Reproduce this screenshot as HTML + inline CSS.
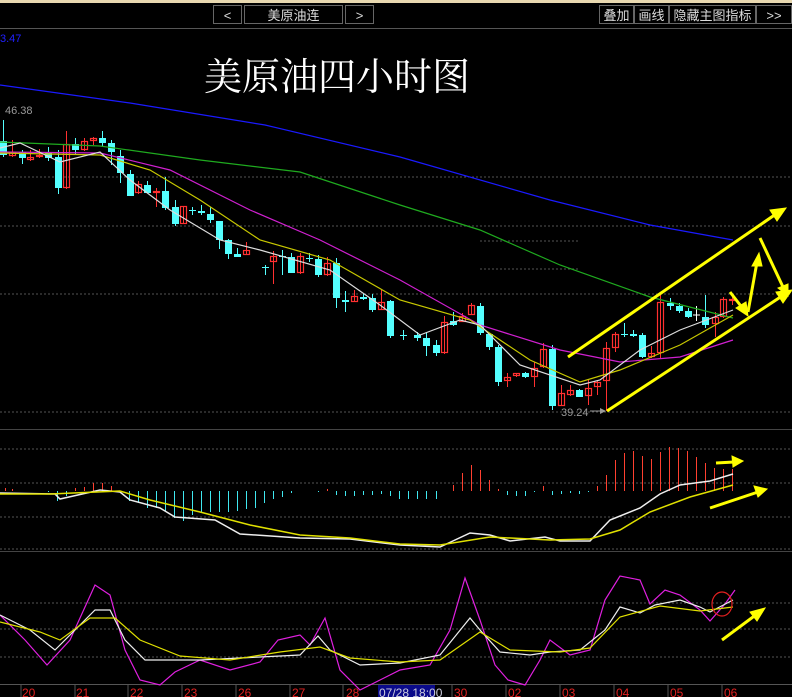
<!DOCTYPE html>
<html><head><meta charset="utf-8"><style>
html,body{margin:0;padding:0;background:#000;width:792px;height:697px;overflow:hidden;font-family:"Liberation Sans","Noto Sans CJK SC",sans-serif}
.top{position:absolute;left:0;top:0;width:792px;height:3px;background:#e8d8b0}
.btn{position:absolute;top:5px;height:19px;border:1px solid #666;color:#ddd;font-size:13px;line-height:19px;text-align:center;box-sizing:border-box}
</style></head><body>
<div class="top"></div>
<div class="btn" style="left:213px;width:29px">&lt;</div>
<div class="btn" style="left:244px;width:99px">美原油连</div>
<div class="btn" style="left:345px;width:29px">&gt;</div>
<div class="btn" style="left:599px;width:35px">叠加</div>
<div class="btn" style="left:634px;width:35px">画线</div>
<div class="btn" style="left:669px;width:87px">隐藏主图指标</div>
<div class="btn" style="left:756px;width:36px">&gt;&gt;</div>
<svg id="s" width="792" height="697" style="position:absolute;left:0;top:0" xmlns="http://www.w3.org/2000/svg">
<line x1="0" y1="28.5" x2="792" y2="28.5" stroke="#555"/>
<line x1="0" y1="429.5" x2="792" y2="429.5" stroke="#444"/>
<line x1="0" y1="551.5" x2="792" y2="551.5" stroke="#444"/>
<line x1="0" y1="684.5" x2="792" y2="684.5" stroke="#555"/>
<g stroke="#555" stroke-dasharray="2,2">
<line x1="0" y1="177" x2="792" y2="177"/><line x1="0" y1="226" x2="792" y2="226"/>
<line x1="0" y1="294" x2="792" y2="294"/><line x1="0" y1="412" x2="792" y2="412"/>
<line x1="480" y1="241" x2="580" y2="241"/><line x1="480" y1="269" x2="580" y2="269"/>
<line x1="0" y1="449" x2="792" y2="449"/><line x1="0" y1="483" x2="792" y2="483"/>
<line x1="0" y1="517" x2="792" y2="517"/><line x1="0" y1="549" x2="792" y2="549"/>
<line x1="0" y1="603" x2="792" y2="603"/><line x1="0" y1="629" x2="792" y2="629"/><line x1="0" y1="657" x2="792" y2="657"/>
</g>
<g id="c"></g>
<g fill="none" stroke-width="1.2">
<polyline stroke="#1a1aff" points="0,85 130,103 265,125 400,157 550,200 650,225 733,240"/>
<polyline stroke="#1faa1f" points="0,142 100,146 200,160 300,172 400,205 480,230 560,265 650,297 733,318"/>
<polyline stroke="#d020d0" points="0,152 100,153 170,170 250,210 320,240 400,280 480,325 560,350 620,362 680,357 733,340"/>
<polyline stroke="#c8c800" points="0,153 100,155 150,170 200,200 260,240 330,260 400,300 470,320 530,360 580,382 620,370 680,345 733,315"/>
<polyline stroke="#ddd" points="0,148 20,143 60,162 100,152 130,180 170,210 220,240 260,250 330,270 380,305 420,335 460,320 480,325 520,365 580,385 600,380 640,350 680,330 733,310"/>
<polyline stroke="#eee" stroke-width="1.5" points="0,493 55,494 60,499 100,490 120,492 130,500 160,508 175,517 215,520 240,534 300,538 350,539 400,545 440,547 470,533 490,535 510,541 545,537 560,541 590,541 610,520 640,508 660,494 680,485 710,481 733,474"/>
<polyline stroke="#e0e000" stroke-width="1.5" points="0,494 50,494 120,491 150,500 200,512 250,525 300,535 350,538 400,544 440,545 490,537 550,540 590,539 620,530 650,512 690,497 733,485"/>
<polyline stroke="#e020e0" points="0,615 25,640 47,665 70,640 95,585 110,595 125,650 140,680 160,685 175,672 200,660 230,670 260,662 278,640 300,635 310,645 325,618 340,670 360,690 380,680 400,670 430,665 450,630 465,578 480,620 495,665 508,680 525,685 540,660 550,640 570,655 590,650 605,600 620,576 640,580 650,604 665,590 680,595 700,610 710,621 725,604 735,590"/>
<polyline stroke="#eee" points="0,615 30,630 55,650 70,635 95,610 110,610 125,640 145,660 200,660 260,657 300,655 318,636 330,650 360,665 400,663 440,655 470,618 480,630 500,652 530,655 550,652 580,650 605,630 620,607 640,613 655,605 680,600 700,607 710,612 733,600"/>
<polyline stroke="#e0e000" points="0,622 40,632 60,640 90,618 115,618 140,640 180,656 230,660 280,652 320,647 350,658 400,662 440,660 480,632 510,650 560,652 590,648 620,617 660,606 700,611 733,607"/>
<ellipse cx="722" cy="604" rx="10" ry="12" stroke="#e02020"/>
</g>
<g stroke="#ffff00" stroke-width="3" fill="#ffff00">
<line x1="568" y1="357" x2="776" y2="214"/><polygon points="786,208 770,210 777,221" stroke-width="1"/>
<line x1="607" y1="411" x2="782" y2="296"/><polygon points="792,290 776,292 783,303" stroke-width="1"/>
<line x1="730" y1="292" x2="744" y2="310"/><polygon points="748,316 736,308 746,302" stroke-width="1"/>
<line x1="748" y1="312" x2="757" y2="262"/><polygon points="759,253 752,266 762,266" stroke-width="1"/>
<line x1="760" y1="238" x2="783" y2="287"/><polygon points="788,296 778,288 788,284" stroke-width="1"/>
<line x1="716" y1="463" x2="734" y2="462"/><polygon points="743,461 732,456 733,467" stroke-width="1"/>
<line x1="710" y1="508" x2="758" y2="492"/><polygon points="767,489 754,486 758,497" stroke-width="1"/>
<line x1="722" y1="640" x2="757" y2="614"/><polygon points="765,608 750,612 757,621" stroke-width="1"/>
</g>
<line x1="590" y1="411" x2="603" y2="411" stroke="#999"/><polygon points="606,411 600,408 600,414" fill="#999"/>
<text x="0" y="42" fill="#2020ff" font-size="11">3.47</text>
<text x="5" y="114" fill="#999" font-size="11">46.38</text>
<text x="561" y="416" fill="#999" font-size="11">39.24</text>
<text x="204" y="90" fill="#fff" font-size="38" font-family="'Noto Serif CJK SC',serif">美原油四小时图</text>
<rect x="378" y="685" width="57" height="12" fill="#0a0a8a"/>
<g fill="#e02020" font-size="12">
<text x="22" y="697">20</text><text x="76" y="697">21</text><text x="130" y="697">22</text><text x="184" y="697">23</text><text x="238" y="697">26</text><text x="292" y="697">27</text><text x="346" y="697">28</text><text x="454" y="697">30</text><text x="508" y="697">02</text><text x="562" y="697">03</text><text x="616" y="697">04</text><text x="670" y="697">05</text><text x="724" y="697">06</text>
</g>
<text x="379" y="697" fill="#ccd" font-size="12">07/28 18:00</text>
<g stroke="#555"><line x1="21" y1="685" x2="21" y2="697"/><line x1="75" y1="685" x2="75" y2="697"/><line x1="128" y1="685" x2="128" y2="697"/><line x1="182" y1="685" x2="182" y2="697"/><line x1="236" y1="685" x2="236" y2="697"/><line x1="290" y1="685" x2="290" y2="697"/><line x1="343" y1="685" x2="343" y2="697"/><line x1="452" y1="685" x2="452" y2="697"/><line x1="506" y1="685" x2="506" y2="697"/><line x1="560" y1="685" x2="560" y2="697"/><line x1="614" y1="685" x2="614" y2="697"/><line x1="668" y1="685" x2="668" y2="697"/><line x1="722" y1="685" x2="722" y2="697"/></g>
</svg>
<script>
var C=[[3,0,141,155,120,157],[12,1,152,156,140,157],[22,0,152,158,150,164],[30,1,157,160,150,161],[39,1,155,157,149,158],[48,0,153,158,147,161],[58,0,157,188,150,194],[66,1,144,188,131,189],[75,0,144,150,138,155],[84,1,141,150,138,151],[93,1,138,141,137,145],[102,0,138,143,131,147],[111,0,143,152,140,165],[120,0,156,173,150,183],[130,0,174,196,170,196],[138,1,184,193,181,194],[147,0,185,193,181,193],[156,1,191,192,188,207],[165,0,191,208,177,210],[175,0,207,224,200,226],[183,1,206,224,206,224],[192,0,210,211,207,215],[201,0,211,213,205,215],[210,0,214,220,207,223],[219,0,221,240,221,249],[228,0,240,254,239,259],[237,0,254,257,248,257],[246,1,250,255,242,255],[265,0,267,268,265,275],[273,1,256,262,251,284],[282,0,256,257,250,275],[291,0,257,273,253,273],[300,1,256,273,253,274],[309,0,258,259,253,262],[318,0,259,275,255,277],[327,1,263,275,257,276],[336,0,263,298,258,308],[345,0,300,302,291,312],[354,1,296,302,290,302],[363,0,297,299,294,300],[372,0,298,310,294,312],[381,1,302,310,290,310],[390,0,301,336,300,338],[403,0,335,336,330,340],[417,0,335,338,332,341],[426,0,338,346,332,356],[436,0,345,353,340,356],[444,1,322,353,316,354],[453,0,321,325,312,326],[462,1,316,322,313,322],[471,1,305,315,303,315],[480,0,306,333,303,335],[489,0,334,347,333,350],[498,0,347,382,345,386],[507,1,377,381,373,387],[516,1,373,376,373,377],[525,0,373,377,372,378],[534,1,368,377,362,387],[543,1,349,367,343,368],[552,0,349,406,345,410],[561,1,393,406,385,406],[570,1,390,395,385,396],[579,0,390,397,389,397],[588,1,388,396,380,405],[597,1,382,387,380,395],[606,1,348,381,342,411],[615,1,334,348,332,352],[624,0,334,335,323,337],[633,0,334,336,330,337],[642,0,335,357,333,358],[651,1,353,357,346,358],[660,1,302,353,295,358],[670,0,303,306,298,310],[679,0,306,311,303,313],[688,0,311,317,308,318],[696,2,315,316,306,321],[705,0,317,325,295,328],[715,1,317,324,312,337],[723,1,299,317,297,318],[732,1,299,300,295,305]];
var g=document.getElementById('c'),h='';
C.forEach(function(c){var x=c[0],col=c[1]==0?'#54ffff':c[1]==1?'#ff3030':'#fff';
h+='<line x1="'+(x+.5)+'" y1="'+c[4]+'" x2="'+(x+.5)+'" y2="'+c[5]+'" stroke="'+col+'"/>';
var t=Math.min(c[2],c[3]),b=Math.max(c[2],c[3]),hh=Math.max(b-t,1);
if(c[1]==0)h+='<rect x="'+(x-3)+'" y="'+t+'" width="7" height="'+hh+'" fill="'+col+'"/>';
else if(c[1]==1)h+='<rect x="'+(x-2.5)+'" y="'+(t+.5)+'" width="6" height="'+Math.max(hh-1,1)+'" fill="none" stroke="'+col+'" stroke-width="1.2"/>';
else h+='<line x1="'+(x-3)+'" y1="'+t+'" x2="'+(x+4)+'" y2="'+t+'" stroke="#fff"/>';});
var z=491,H=[[5,-3],[12,-2],[48,1],[57,10],[66,5],[75,-3],[84,-4],[93,-8],[102,-8],[111,-5],[120,1],[129,10],[138,12],[147,17],[156,17],[165,20],[174,27],[183,30],[192,24],[201,21],[210,21],[219,21],[228,21],[237,20],[246,18],[255,17],[264,12],[273,8],[282,6],[291,2],[300,0],[309,0],[318,1],[327,-2],[336,4],[345,5],[354,5],[363,4],[372,4],[381,3],[390,5],[399,8],[408,8],[417,8],[426,8],[436,8],[453,-6],[462,-18],[471,-26],[480,-21],[489,-11],[498,-2],[507,4],[516,5],[525,5],[534,1],[543,-5],[552,4],[561,3],[570,2],[579,3],[588,1],[597,-5],[606,-16],[615,-31],[624,-38],[633,-40],[642,-35],[651,-32],[660,-39],[669,-44],[678,-43],[687,-40],[696,-34],[705,-28],[714,-23],[723,-22],[732,-22]];
H.forEach(function(b){var col=b[1]<0?'#ff4030':'#40e8f0';h+='<line x1="'+(b[0]+.5)+'" y1="'+z+'" x2="'+(b[0]+.5)+'" y2="'+(z+b[1])+'" stroke="'+col+'"/>';});
g.innerHTML=h;
</script>
</body></html>
